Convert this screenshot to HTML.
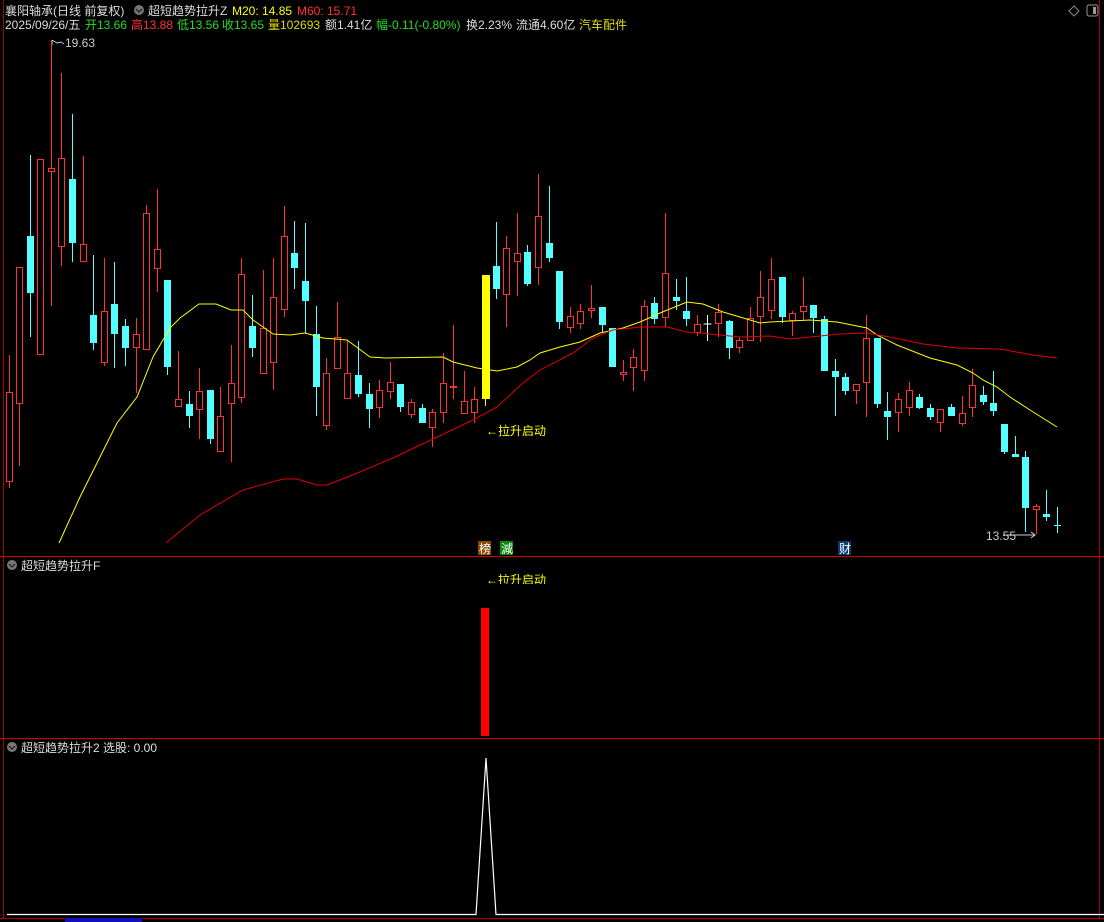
<!DOCTYPE html>
<html><head><meta charset="utf-8"><style>
html,body{margin:0;padding:0;background:#000;width:1104px;height:922px;overflow:hidden}
svg{display:block}
text{font-family:"Liberation Sans","Noto Sans CJK SC",sans-serif;font-size:12px}
</style></head><body>
<svg id="s" width="1104" height="922" xmlns="http://www.w3.org/2000/svg">
<defs><clipPath id="cp"><rect x="470" y="574" width="100" height="10"/></clipPath></defs>
<rect width="1104" height="922" fill="#000"/>
<line x1="3.5" y1="0" x2="3.5" y2="918" stroke="#a00" />
<line x1="1099.5" y1="0" x2="1099.5" y2="918" stroke="#a00" />
<line x1="0" y1="556.5" x2="1104" y2="556.5" stroke="#c00"/>
<line x1="0" y1="738.5" x2="1104" y2="738.5" stroke="#c00"/>
<line x1="0" y1="918.5" x2="1104" y2="918.5" stroke="#a00"/>
<rect x="65" y="918" width="77" height="4" fill="#1010c0"/>
<text x="5" y="15" fill="#ddd">襄阳轴承(日线 前复权)</text>
<circle cx="139" cy="10" r="5" fill="#777"/><path d="M136 9 l3 3 l3 -3" stroke="#222" fill="none" stroke-width="1.3"/>
<text x="148" y="15" fill="#ddd">超短趋势拉升Z</text>
<text x="232" y="15" fill="#ff0">M20: 14.85</text>
<text x="297" y="15" fill="#f33">M60: 15.71</text>
<text x="5" y="29" fill="#ddd">2025/09/26/五</text>
<text x="85" y="29" fill="#2d2">开13.66</text>
<text x="131" y="29" fill="#f33">高13.88</text>
<text x="177" y="29" fill="#2d2">低13.56</text>
<text x="222" y="29" fill="#2d2">收13.65</text>
<text x="268" y="29" fill="#dd0">量102693</text>
<text x="325" y="29" fill="#ddd">额1.41亿</text>
<text x="376" y="29" fill="#2d2">幅-0.11(-0.80%)</text>
<text x="466" y="29" fill="#ddd">换2.23%</text>
<text x="516" y="29" fill="#ddd">流通4.60亿</text>
<text x="579" y="29" fill="#dd0">汽车配件</text>
<path d="M1074 6 l5 5 l-5 5 l-5 -5z" stroke="#888" fill="none"/>
<rect x="1087" y="5" width="11" height="11" rx="2" stroke="#999" fill="none"/><rect x="1093" y="7" width="3" height="7" fill="#999"/>
<path d="M52 40 l0 5 M52 40 l5 3 l4 -1 l3 2" stroke="#ccc" fill="none"/>
<text x="65" y="47" fill="#ccc">19.63</text>
<text x="986" y="540" fill="#ccc">13.55</text>
<path d="M1003 535 h32 m-4 -3 l4 3 l-4 3" stroke="#ccc" fill="none"/>
<text x="486" y="435" fill="#ff0">←拉升启动</text>
<rect x="478" y="541" width="13" height="14" fill="#8a4a00"/><text x="479" y="553" fill="#fff">榜</text>
<rect x="500" y="541" width="13" height="14" fill="#0a8a0a"/><text x="501" y="553" fill="#fff">減</text>
<rect x="838" y="541" width="13" height="14" fill="#0a3a70"/><text x="839" y="553" fill="#fff">财</text>
<circle cx="12" cy="565" r="5" fill="#777"/><path d="M9 564 l3 3 l3 -3" stroke="#222" fill="none" stroke-width="1.3"/>
<text x="21" y="570" fill="#ddd">超短趋势拉升F</text>
<text x="486" y="584" fill="#ff0" clip-path="url(#cp)">←拉升启动</text>
<rect x="481" y="608" width="8" height="128" fill="#f00"/>
<circle cx="12" cy="747" r="5" fill="#777"/><path d="M9 746 l3 3 l3 -3" stroke="#222" fill="none" stroke-width="1.3"/>
<text x="21" y="752" fill="#ddd">超短趋势拉升2 选股: 0.00</text>
<polyline points="7,914.5 476,914.5 486,758 496,914.5 1104,914.5" stroke="#fff" fill="none" stroke-width="1.2"/>
<g id="c"></g>
</svg>
<script>
var D=[
[355,392,482,488,'r'],[267,267,404,466,'r'],[155,236,293,337,'c'],[159,159,355,355,'r'],[40,168,172,306,'r'],
[73,158,247,266,'r'],[114,179,243,262,'c'],[156,244,262,262,'r'],[255,315,343,350,'c'],[258,311,363,366,'r'],
[262,304,334,368,'c'],[319,326,348,366,'c'],[318,334,348,393,'r'],[205,213,350,350,'r'],[189,249,269,292,'r'],
[280,280,367,375,'c'],[351,399,407,407,'r'],[391,404,416,428,'c'],[368,391,410,439,'r'],[390,390,439,444,'c'],
[387,416,452,452,'r'],[345,383,404,462,'r'],[258,274,398,403,'r'],[295,326,348,357,'c'],[270,328,374,374,'r'],
[258,297,363,390,'r'],[206,236,310,317,'r'],[221,253,268,289,'c'],[223,281,301,333,'c'],[306,334,387,416,'c'],
[358,373,426,430,'r'],[302,337,369,369,'r'],[340,373,399,399,'r'],[341,375,394,397,'c'],[383,394,409,428,'c'],
[380,390,408,418,'r'],[362,382,392,399,'r'],[384,384,407,412,'c'],[399,402,415,418,'r'],[404,408,423,423,'c'],
[409,412,428,447,'r'],[353,383,413,423,'r'],[325,386,387,399,'r'],[371,401,414,414,'r'],[387,399,413,423,'r'],
[275,275,399,406,'y'],[222,266,289,299,'c'],[236,248,295,327,'r'],[213,253,262,296,'r'],[245,252,284,286,'c'],
[174,216,268,285,'r'],[186,243,258,262,'c'],[271,271,322,329,'c'],[307,316,328,333,'r'],[304,311,324,329,'r'],
[285,308,311,318,'r'],[307,307,325,332,'c'],[328,328,367,367,'c'],[360,372,375,381,'r'],[349,357,368,391,'r'],
[300,306,371,381,'r'],[297,303,319,324,'c'],[213,273,318,327,'r'],[279,297,301,310,'c'],[277,311,319,326,'c'],
[315,324,333,336,'r'],[315,324,325,341,'w'],[304,312,324,337,'r'],[320,321,348,359,'c'],[337,340,348,353,'r'],
[307,318,341,341,'r'],[271,297,317,342,'r'],[258,279,311,319,'r'],[277,277,317,323,'c'],[311,313,321,336,'r'],
[277,306,312,321,'r'],[305,305,318,333,'c'],[316,319,371,371,'c'],[359,371,377,416,'c'],[373,377,391,395,'c'],
[384,384,391,404,'r'],[315,338,383,417,'r'],[338,338,404,408,'c'],[392,411,417,440,'c'],[393,399,413,432,'r'],
[382,390,408,416,'r'],[394,397,408,409,'c'],[404,408,417,420,'c'],[409,409,423,432,'r'],[404,407,416,416,'c'],
[396,413,424,426,'r'],[369,385,408,417,'r'],[386,395,402,405,'c'],[371,403,411,416,'c'],[424,424,452,454,'c'],
[436,454,457,457,'c'],[451,457,508,532,'c'],[504,506,510,534,'r'],[490,514,517,521,'c'],[507,525,526,533,'c']];
var h='';
for(var i=0;i<D.length;i++){var d=D[i],x=8.5+i*10.59,xc=Math.round(x)+0.5,col=d[4];
var c=col=='r'?'#ff3232':col=='c'?'#54ffff':col=='y'?'#ffff00':'#ffffff';
h+='<line x1="'+xc+'" y1="'+d[0]+'" x2="'+xc+'" y2="'+d[3]+'" stroke="'+c+'"/>';
var bh=Math.max(d[2]-d[1],1);
if(col=='r'){h+='<rect x="'+(xc-3)+'" y="'+(d[1]+0.5)+'" width="6" height="'+Math.max(bh-1,1)+'" fill="#000" stroke="'+c+'"/>';}
else if(col=='w'){h+='<line x1="'+(xc-4)+'" y1="'+d[1]+'" x2="'+(xc+4)+'" y2="'+d[1]+'" stroke="#fff"/>';}
else{h+='<rect x="'+(xc-3.5)+'" y="'+d[1]+'" width="'+(col=='y'?8:7)+'" height="'+bh+'" fill="'+c+'"/>';}}
h+='<polyline fill="none" stroke="#ffff00" points="59,543 80,497 100,457 117,423 137,397 153,357 170,328 180,318 199,304 216,304 231,310 243,310 253,320 273,334 290,335 305,333 323,338 347,340 370,357 385,358 443,357 453,362 477,368 497,371 517,367 530,360 540,353 560,347 580,342 600,333 623,328 640,322 660,313 687,302 703,304 723,312 740,317 760,323 770,322 810,320 837,322 867,328 877,335 897,345 930,358 957,365 973,373 983,380 997,387 1010,397 1030,410 1057,427"/>';
h+='<polyline fill="none" stroke="#e00000" points="166,543 200,515 243,490 283,479 297,479 317,485 327,485 350,476 393,458 473,420 497,407 523,383 540,370 573,353 593,338 613,330 640,327 667,327 687,332 700,333 740,337 770,336 790,339 840,334 867,333 890,337 923,344 957,348 1000,349 1033,355 1057,358"/>';
document.getElementById('c').innerHTML=h;
</script>
</body></html>
